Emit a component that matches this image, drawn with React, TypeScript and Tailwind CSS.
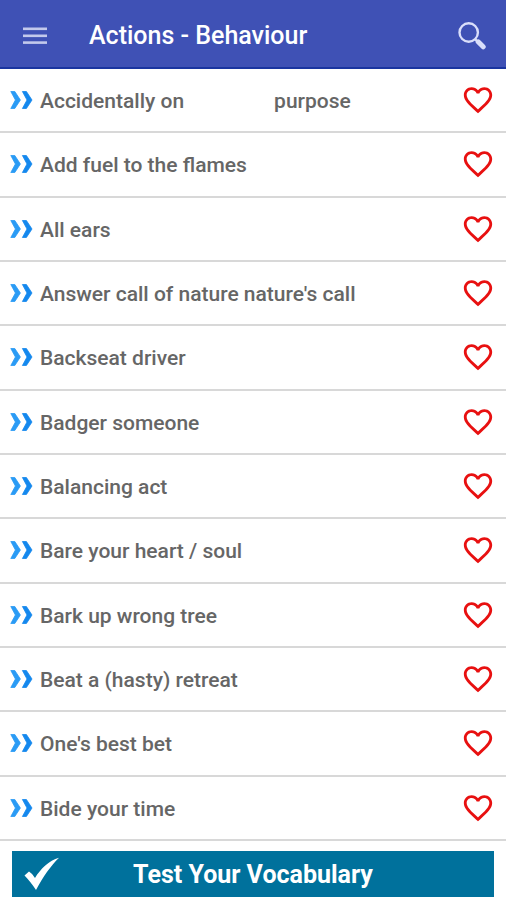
const idioms = [
  ["Accidentally on", "purpose"],
  ["Add fuel to the flames"],
  ["All ears"],
  ["Answer call of nature nature's call"],
  ["Backseat driver"],
  ["Badger someone"],
  ["Balancing act"],
  ["Bare your heart / soul"],
  ["Bark up wrong tree"],
  ["Beat a (hasty) retreat"],
  ["One's best bet"],
  ["Bide your time"],
];

function MenuIcon() {
  return (
    <svg width="24" height="18" viewBox="0 0 24 18" fill="#c3c9ec" aria-hidden="true">
      <rect y="0.5" width="24" height="2.6" />
      <rect y="7.5" width="24" height="2.6" />
      <rect y="14.3" width="24" height="2.6" />
    </svg>
  );
}

function SearchIcon() {
  return (
    <svg width="28" height="28" viewBox="0 0 28 28" fill="none" stroke="#d9defa" aria-hidden="true">
      <circle cx="10.7" cy="10.5" r="9.2" strokeWidth="2.4" />
      <path d="M16.8 16.8 20 20" strokeWidth="2.4" />
      <path d="M20.2 19.8 25.2 24.8" strokeWidth="5" strokeLinecap="round" />
    </svg>
  );
}

function ChevronsIcon() {
  return (
    <svg
      width="23"
      height="20"
      viewBox="0 0 23 20"
      strokeWidth="0.8"
      strokeLinejoin="round"
      className="shrink-0"
      aria-hidden="true"
    >
      <path d="M0.8 1.5H4.8L10.4 10 4.8 18.5H0.8L5.4 10z" fill="#2a9bf5" stroke="#2a9bf5" />
      <path d="M12.4 1.5H16.4L22 10 16.4 18.5H12.4L17 10z" fill="#1488ee" stroke="#1488ee" />
    </svg>
  );
}

function HeartIcon() {
  return (
    <svg width="34" height="34" viewBox="0 0 24 24" fill="#e81010" aria-hidden="true">
      <path d="M16.5 3c-1.74 0-3.41.81-4.5 2.09C10.91 3.81 9.24 3 7.5 3 4.42 3 2 5.42 2 8.5c0 3.78 3.4 6.86 8.55 11.54L12 21.35l1.45-1.32C18.6 15.36 22 12.28 22 8.5 22 5.42 19.58 3 16.5 3zm-4.4 15.55l-.1.1-.1-.1C7.14 14.24 4 11.39 4 8.5 4 6.5 5.5 5 7.5 5c1.54 0 3.04.99 3.57 2.36h1.87C13.46 5.99 14.96 5 16.5 5c2 0 3.5 1.5 3.5 3.5 0 2.89-3.14 5.74-7.9 10.05z" />
    </svg>
  );
}

function CheckIcon() {
  return (
    <svg width="36" height="34" viewBox="0 0 36 34" fill="#fff" aria-hidden="true">
      <path d="M0.5 18.5 5 14.5Q9 17 11 21C16.5 12 25 3.5 35 0.8 27 8.5 19 20 12 33 8.5 27.5 4.5 22.5 0.5 18.5z" />
    </svg>
  );
}

export default function App() {
  return (
    <div className="flex min-h-screen flex-col bg-white font-[Roboto,sans-serif]">
      <header className="flex h-[69px] items-center border-b-2 border-[#1a35a0] bg-[#3f51b5] pt-1 pr-5 pl-[23px]">
        <button aria-label="Open menu">
          <MenuIcon />
        </button>
        <h1 className="ml-[42px] flex-1 text-[25px] leading-8 font-medium text-white">
          Actions - Behaviour
        </h1>
        <button aria-label="Search">
          <SearchIcon />
        </button>
      </header>

      <ul className="flex flex-1 flex-col">
        {idioms.map((parts) => (
          <li
            key={parts[0]}
            className="flex min-h-16 flex-1 items-center border-b-2 border-[#d8d8d8] pr-[11px] pl-[10px]"
          >
            <ChevronsIcon />
            <a
              href="#"
              className="ml-[7px] flex flex-1 gap-[90px] pt-0.5 text-[21px] leading-7 font-medium text-[#666666]"
            >
              {parts.map((part) => (
                <span key={part}>{part}</span>
              ))}
            </a>
            <button aria-label={`Add ${parts.join(" ")} to favourites`}>
              <HeartIcon />
            </button>
          </li>
        ))}
      </ul>

      <footer className="px-3 pt-[10px] pb-[3px]">
        <button className="grid h-[46px] w-full grid-cols-[36px_1fr_36px] items-center bg-[#00719c] px-3 text-[25px] leading-8 font-bold text-white">
          <CheckIcon />
          <span className="pt-0.5">Test Your Vocabulary</span>
        </button>
      </footer>
    </div>
  );
}
